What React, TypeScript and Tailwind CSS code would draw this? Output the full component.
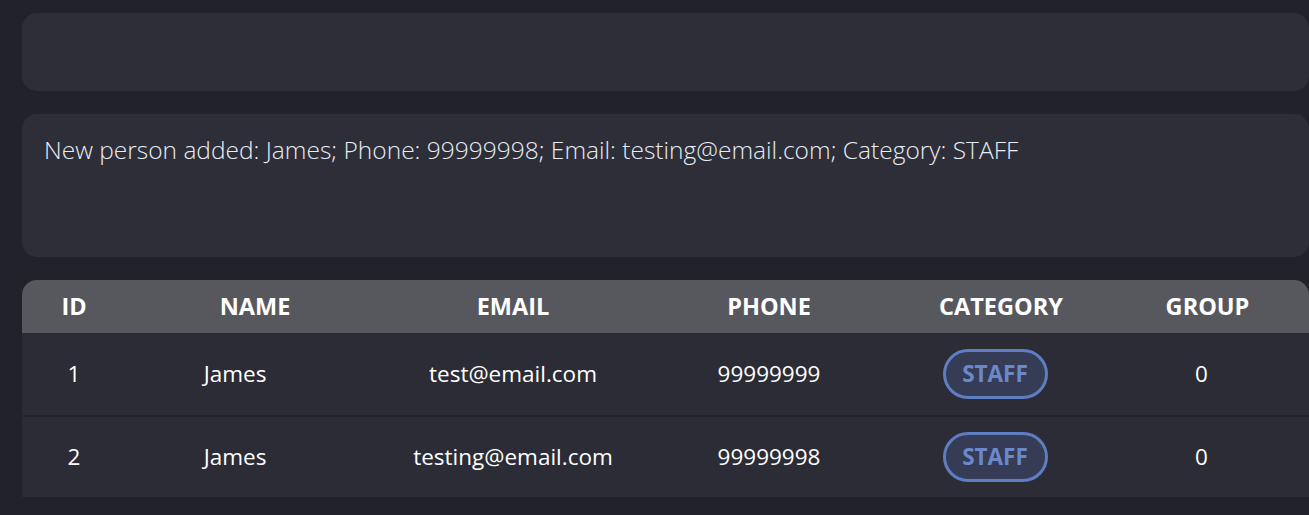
const people = [
  { id: 1, name: "James", email: "test@email.com", phone: "99999999", category: "STAFF", group: 0 },
  { id: 2, name: "James", email: "testing@email.com", phone: "99999998", category: "STAFF", group: 0 },
];

const cols = "grid grid-cols-[104px_258px_258px_254px_210px_203px]";

function Badge({ label }: { label: string }) {
  return (
    <span className="inline-flex items-center justify-center h-[50px] w-[105px] rounded-full border-[3px] border-[#5e7dc2] bg-[#363c55] text-[22.5px] font-bold text-[#6a89cb]">
      {label}
    </span>
  );
}

export default function App() {
  return (
    <div
      className="min-h-[515px] bg-[#22222b] pl-[22px] pt-[13px] flex flex-col gap-[23px]"
      style={{ fontFamily: '"Open Sans", "Noto Sans", sans-serif' }}
    >
      <div className="h-[78px] rounded-[15px] bg-[#2e2e38]" />

      <div className="h-[143px] rounded-[15px] bg-[#2e2e38] px-[22px] pt-[20px]">
        <p className="text-[24.5px] font-light leading-[32px] text-[#e6edf4]">
          New person added: James; Phone: 99999998; Email: testing@email.com; Category: STAFF
        </p>
      </div>

      <div className="flex flex-col">
        <div className={`${cols} h-[53px] items-center rounded-t-[15px] bg-[#57585e] text-[23.5px] font-bold text-white`}>
          <div className="text-center">ID</div>
          <div className="text-center">NAME</div>
          <div className="text-center">EMAIL</div>
          <div className="text-center">PHONE</div>
          <div className="text-center">CATEGORY</div>
          <div className="text-center">GROUP</div>
        </div>
        {people.map((p, i) => (
          <div
            key={p.id}
            className={`${cols} h-[82px] items-center bg-[#2c2c36] text-[22.5px] text-white ${
              i > 0 ? "border-t-2 border-[#24242d]" : ""
            }`}
          >
            <div className="text-center">{p.id}</div>
            <div className="text-center pr-[40px]">{p.name}</div>
            <div className="text-center">{p.email}</div>
            <div className="text-center">{p.phone}</div>
            <div className="flex justify-center pr-[12px]">
              <Badge label={p.category} />
            </div>
            <div className="text-center pr-[12px]">{p.group}</div>
          </div>
        ))}
      </div>
    </div>
  );
}
